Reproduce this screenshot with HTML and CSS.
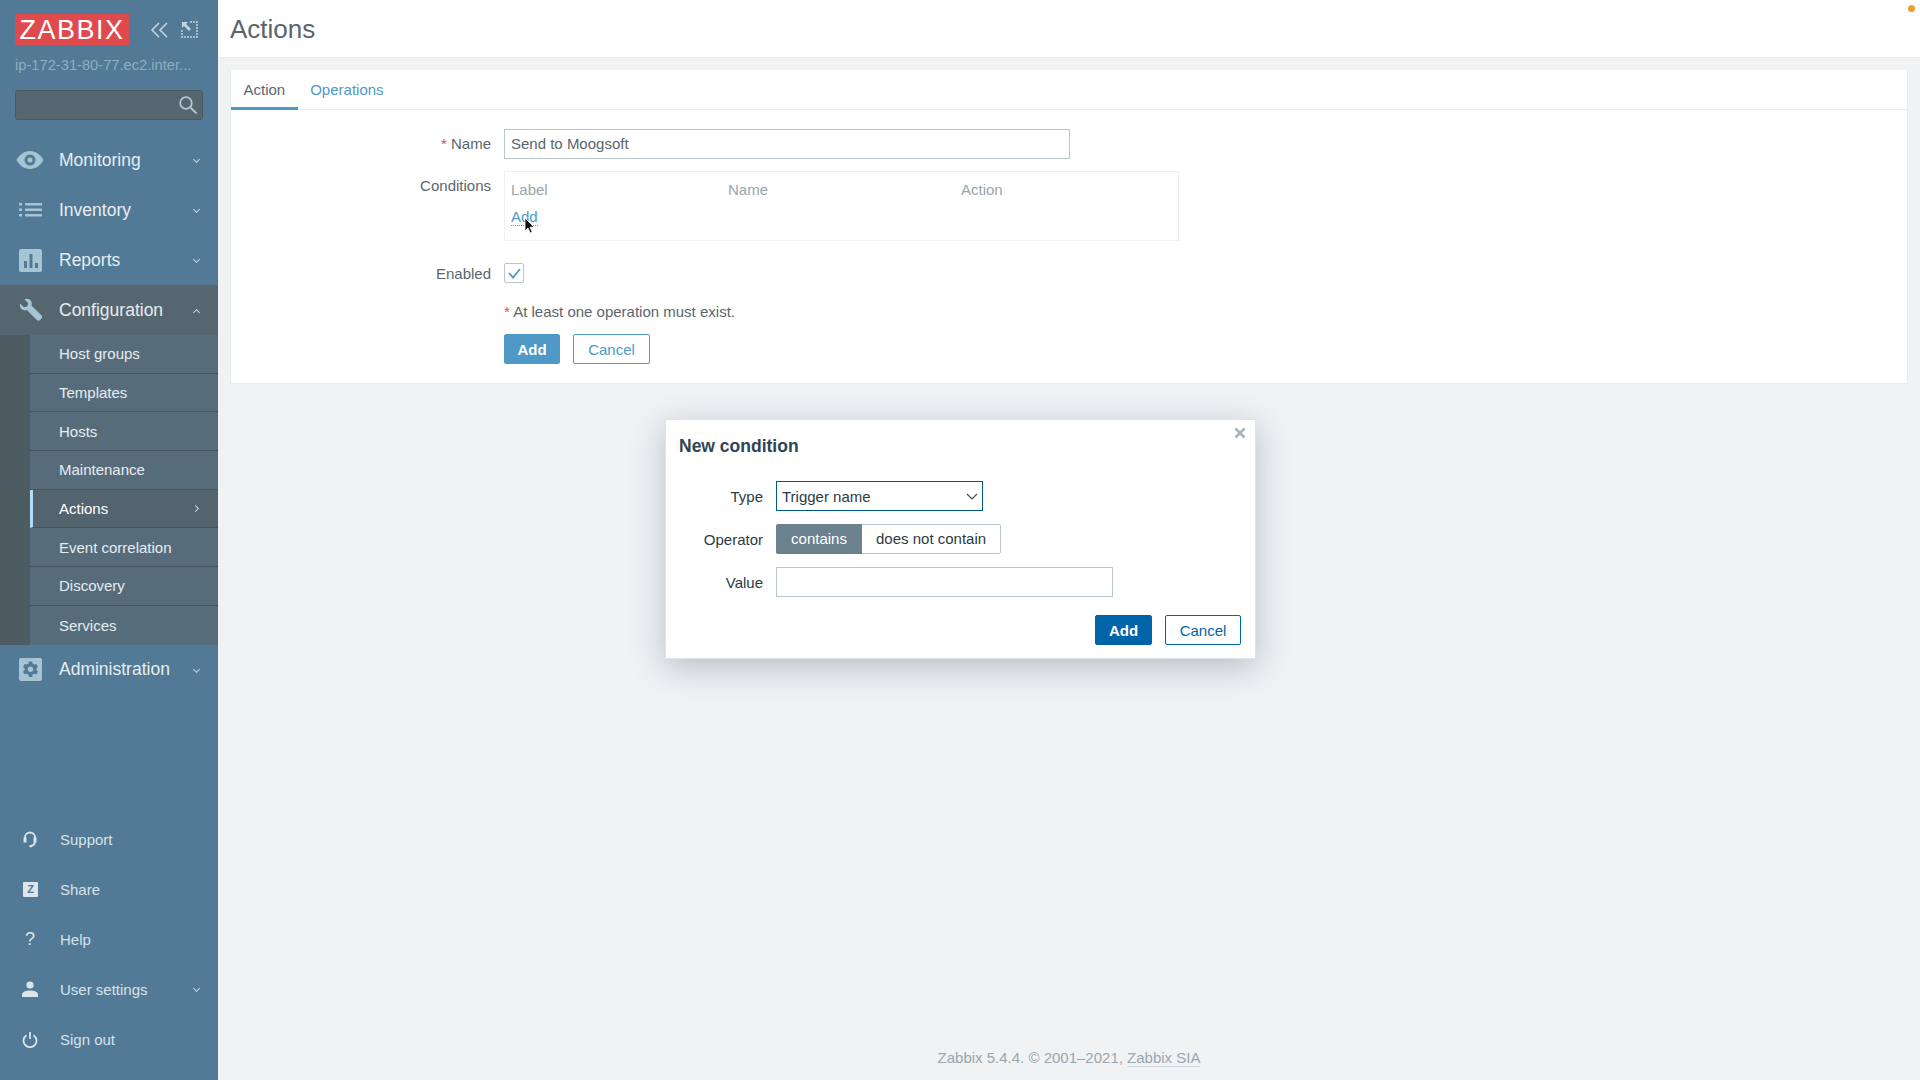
FILE: index.html
```html
<!DOCTYPE html>
<html lang="en">
<head>
  <meta charset="UTF-8">
  <meta name="viewport" content="width=device-width, initial-scale=1.0">
  <title>Actions</title>
  <link rel="stylesheet" href="styles.css">
</head>
<body>
  <aside class="sidebar">
    <div class="brand">
      <span class="logo">ZABBIX</span>
      <svg class="brand-icon collapse" width="20" height="18" viewBox="0 0 20 18"><path d="M9 2 2 9l7 7M17 2l-7 7 7 7"/></svg>
      <svg class="brand-icon expand" width="17" height="17" viewBox="0 0 17 17"><path class="dotted" d="M9 1h7v15H1V9"/><path class="solid" d="M1 1h6L5 3l5 5-2 2-5-5-2 2z"/></svg>
    </div>
    <div class="hostname">ip-172-31-80-77.ec2.inter...</div>
    <div class="search">
      <svg width="20" height="20" viewBox="0 0 20 20"><circle cx="8" cy="8" r="5.8"/><path d="m12.5 12.5 6 6"/></svg>
    </div>

    <nav class="menu">
      <a class="menu-item">
        <span class="menu-icon"><svg width="28" height="20" viewBox="0 0 28 20"><path fill-rule="evenodd" d="M14 1C8 1 3 5 0.500 10 3 15 8 19 14 19s11-4 13.500-9C25 5 20 1 14 1zm0 3.500a5.500 5.500 0 1 1 0 11 5.500 5.500 0 0 1 0-11zm0 3a2.500 2.500 0 1 0 0 5 2.500 2.500 0 0 0 0-5z"/></svg></span>
        Monitoring <span class="caret down"></span>
      </a>
      <a class="menu-item">
        <span class="menu-icon"><svg width="24" height="16" viewBox="0 0 24 16"><path d="M0 1h3v2.500H0zM6 1h17v2.500H6zM0 6.500h3V9H0zM6 6.500h17V9H6zM0 12h3v2.500H0zM6 12h17v2.500H6z"/></svg></span>
        Inventory <span class="caret down"></span>
      </a>
      <a class="menu-item">
        <span class="menu-icon"><svg width="23" height="23" viewBox="0 0 23 23"><path fill-rule="evenodd" d="M2 0h19a2 2 0 0 1 2 2v19a2 2 0 0 1-2 2H2a2 2 0 0 1-2-2V2a2 2 0 0 1 2-2zm3 12v7h3v-7zm5.500-7v14h3V5zM16 14v5h3v-5z"/></svg></span>
        Reports <span class="caret down"></span>
      </a>
      <div class="menu-group">
        <a class="menu-item open">
          <span class="menu-icon"><svg width="24" height="24" viewBox="0 0 24 24"><path d="M1 5.500 5 9.300l3.300-.8.900-3.300L5.400 1.300C8.500-.4 12 1.500 12.700 4.500c.2 1-.1 2.300-.3 3l10 9.800c1 1 1 2.300.1 3.300l-1.400 1.500c-1 1-2.400 1-3.300 0l-9.900-10c-.8.300-2.200.5-3.100.2C2 11.700.2 8.600 1 5.500z"/></svg></span>
          Configuration <span class="caret up"></span>
        </a>
        <div class="submenu">
          <a class="sub-item">Host groups</a>
          <a class="sub-item">Templates</a>
          <a class="sub-item">Hosts</a>
          <a class="sub-item">Maintenance</a>
          <a class="sub-item active">Actions <span class="caret right"></span></a>
          <a class="sub-item">Event correlation</a>
          <a class="sub-item">Discovery</a>
          <a class="sub-item">Services</a>
        </div>
      </div>
      <a class="menu-item">
        <span class="menu-icon"><svg width="23" height="23" viewBox="0 0 23 23"><path fill-rule="evenodd" d="M2 0h19a2 2 0 0 1 2 2v19a2 2 0 0 1-2 2H2a2 2 0 0 1-2-2V2a2 2 0 0 1 2-2zm7.800 3.500-.5 2.300-1.400.8-2.200-.7-1.700 3 1.700 1.500v1.600L4 13.500l1.700 3 2.200-.7 1.400.8.500 2.300h3.400l.5-2.300 1.400-.8 2.200.7 1.700-3-1.700-1.500v-1.600L19 8.900l-1.700-3-2.200.7-1.400-.8-.5-2.300zm1.700 5a2.700 2.700 0 1 1 0 5.400 2.700 2.700 0 0 1 0-5.400z"/></svg></span>
        Administration <span class="caret down"></span>
      </a>
    </nav>

    <nav class="user-menu">
      <a class="user-item">
        <span class="user-icon"><svg width="16" height="18" viewBox="0 0 16 18"><path d="M3 11V7.500a5 5 0 0 1 10 0V11c0 2.500-1.500 4.500-4 5"/><path class="fill" d="M1.500 7.500h3v5h-3zM11.500 7.500h3v5h-3zM7.500 15h2.500v2.200H7.500z"/></svg></span>
        Support
      </a>
      <a class="user-item">
        <span class="user-icon"><span class="share-box">Z</span></span>
        Share
      </a>
      <a class="user-item">
        <span class="user-icon help">?</span>
        Help
      </a>
      <a class="user-item">
        <span class="user-icon"><svg width="16" height="16" viewBox="0 0 16 16"><circle class="fill" cx="8" cy="4" r="3.600"/><path class="fill" d="M0 16v-2.500C0 11 4 9.500 8 9.500s8 1.500 8 4V16z"/></svg></span>
        User settings <span class="caret down"></span>
      </a>
      <a class="user-item">
        <span class="user-icon"><svg width="16" height="17" viewBox="0 0 16 17"><path d="M4.500 4.200a6.500 6.500 0 1 0 7 0M8 1v7"/></svg></span>
        Sign out
      </a>
    </nav>
  </aside>

  <main class="main">
    <header class="page-header">
      <h1>Actions</h1>
    </header>

    <section class="panel">
      <div class="tabs">
        <a class="tab active">Action</a>
        <a class="tab">Operations</a>
      </div>
      <form class="form">
        <div class="form-row row-name">
          <label class="form-label"><span class="req">*</span> Name</label>
          <input class="text-input name-input" type="text" value="Send to Moogsoft">
        </div>
        <div class="form-row row-conditions">
          <label class="form-label">Conditions</label>
          <div class="conditions">
            <div class="cond-head">
              <span class="col-label">Label</span>
              <span class="col-name">Name</span>
              <span>Action</span>
            </div>
            <a class="link-add">Add</a>
          </div>
        </div>
        <div class="form-row row-enabled">
          <label class="form-label">Enabled</label>
          <span class="checkbox">
            <svg width="13" height="11" viewBox="0 0 13 11"><path d="m1 5 4 4.500L12 1"/></svg>
          </span>
        </div>
        <div class="form-row row-note">
          <span class="form-label"></span>
          <span class="note"><span class="req">*</span> At least one operation must exist.</span>
        </div>
        <div class="form-row row-buttons">
          <span class="form-label"></span>
          <button class="btn primary" type="button">Add</button>
          <button class="btn outline" type="button">Cancel</button>
        </div>
      </form>
    </section>

    <footer class="footer">Zabbix 5.4.4. © 2001–2021, <a>Zabbix SIA</a></footer>
  </main>

  <div class="status-dot"></div>

  <div class="dialog">
    <span class="dialog-close">
      <svg width="12" height="12" viewBox="0 0 12 12"><path d="m1.500 1.500 9 9M10.500 1.500l-9 9"/></svg>
    </span>
    <h4>New condition</h4>
    <div class="dialog-row">
      <label class="dialog-label">Type</label>
      <div class="select">Trigger name
        <svg width="12" height="7" viewBox="0 0 12 7"><path d="m1 1 5 5 5-5"/></svg>
      </div>
    </div>
    <div class="dialog-row">
      <label class="dialog-label">Operator</label>
      <div class="radio-group">
        <span class="radio on">contains</span>
        <span class="radio">does not contain</span>
      </div>
    </div>
    <div class="dialog-row">
      <label class="dialog-label">Value</label>
      <input class="text-input value-input" type="text">
    </div>
    <div class="dialog-buttons">
      <button class="btn dlg-primary" type="button">Add</button>
      <button class="btn dlg-outline" type="button">Cancel</button>
    </div>
  </div>

  <svg class="cursor" width="12" height="18" viewBox="0 0 12 18"><path d="M1 1v13l3-3 2.200 5 2-.9L6 10.200h4.200z"/></svg>
</body>
</html>
```

FILE: styles.css
```css
* {
  box-sizing: border-box;
}
html, body {
  height: 100%;
}
body {
  margin: 0;
  display: flex;
  overflow: hidden;
  font-family: "Liberation Sans", Arial, sans-serif;
  font-size: 15px;
  color: #5a666c;
  background: #f0f2f4;
}

/* sidebar */
.sidebar {
  width: 218px;
  height: 1080px;
  flex-shrink: 0;
  display: flex;
  flex-direction: column;
  background: #527a96;
}
.brand {
  display: flex;
  align-items: center;
  height: 31px;
  margin: 14px 0 0 15px;
}
.logo {
  width: 114px;
  height: 31px;
  line-height: 32px;
  text-align: center;
  font-size: 27px;
  letter-spacing: 1.500px;
  color: #fff;
  background: #df4a4c;
}
.brand-icon {
  fill: none;
  stroke: #c3d4df;
}
.brand-icon.collapse {
  margin-left: 21px;
  stroke-width: 1.6;
}
.brand-icon.expand {
  margin-left: 11px;
}
.brand-icon .dotted {
  stroke-dasharray: 2 1;
  stroke-width: 1.500;
}
.brand-icon .solid {
  fill: #c3d4df;
  stroke: none;
}
.hostname {
  margin: 12px 0 0 15px;
  height: 17px;
  line-height: 17px;
  font-size: 14.700px;
  color: #8fadc0;
  white-space: nowrap;
}
.search {
  width: 188px;
  height: 30px;
  margin: 16px 0 0 15px;
  padding: 4px 4px 0 0;
  display: flex;
  justify-content: flex-end;
  background: #56666f;
  border: 1px solid #4a5961;
  border-radius: 3px;
}
.search svg {
  fill: none;
  stroke: #b4c6d1;
  stroke-width: 1.800;
}
.menu {
  margin-top: 15px;
}
.menu-item {
  height: 50px;
  display: flex;
  align-items: center;
  position: relative;
  font-size: 17.500px;
  color: #e6edf1;
}
.menu-icon {
  width: 59px;
  padding-left: 16px;
  flex-shrink: 0;
  display: flex;
  align-items: center;
}
.menu-icon svg {
  fill: #a7c4d5;
}
.menu-item:nth-child(2) .menu-icon,
.menu-item:nth-child(3) .menu-icon,
.menu-item:nth-child(5) .menu-icon,
.menu-item.open .menu-icon {
  padding-left: 19px;
}
.menu-item.open {
  background: #55666f;
}
.caret {
  position: absolute;
  right: 19px;
  top: 50%;
  width: 5px;
  height: 5px;
  border-right: 1px solid #c3d4df;
  border-bottom: 1px solid #c3d4df;
}
.caret.down {
  margin-top: -3px;
  transform: rotate(45deg);
}
.caret.up {
  margin-top: 0;
  transform: rotate(-135deg);
}
.caret.right {
  right: 20px;
  margin-top: -3px;
  transform: rotate(-45deg);
}
.submenu {
  padding-left: 30px;
  background: #4d5b62;
}
.sub-item {
  height: 38.700px;
  padding-left: 29px;
  display: flex;
  align-items: center;
  position: relative;
  color: #e6edf1;
  background: #566c7b;
  border-bottom: 1px solid #47555e;
}
.sub-item:last-child {
  border-bottom: 0;
}
.sub-item.active {
  background: #53646f;
  border-left: 3px solid #b3dcf5;
  padding-left: 26px;
  color: #fff;
}
.user-menu {
  margin-top: auto;
  padding-bottom: 16px;
}
.user-item {
  height: 50px;
  display: flex;
  align-items: center;
  position: relative;
  color: #d7e2e9;
}
.user-icon {
  width: 60px;
  padding-left: 22px;
  flex-shrink: 0;
  display: flex;
  align-items: center;
}
.user-icon svg {
  fill: none;
  stroke: #dbe5eb;
  stroke-width: 1.800;
}
.user-icon .fill {
  fill: #dbe5eb;
  stroke: none;
}
.share-box {
  width: 15px;
  height: 15px;
  margin-left: 1px;
  line-height: 15px;
  text-align: center;
  font-size: 11px;
  font-weight: bold;
  color: #527a96;
  background: #dbe5eb;
  border-radius: 1px;
}
.user-icon.help {
  padding-left: 25px;
  font-size: 18px;
  color: #dbe5eb;
}

/* main area */
.main {
  flex: 1;
  display: flex;
  flex-direction: column;
  height: 1080px;
  min-width: 0;
}
.page-header {
  height: 58px;
  padding: 1px 0 0 12px;
  display: flex;
  align-items: center;
  background: #fff;
  border-bottom: 1px solid #e9ecee;
}
.page-header h1 {
  margin: 0;
  font-size: 26px;
  font-weight: normal;
  color: #59656b;
}
.panel {
  height: 314px;
  margin: 12px 12px 0 12px;
  background: #fff;
  border: 1px solid #e9ecee;
  border-width: 0 1px 1px 1px;
}
.tabs {
  display: flex;
  height: 40px;
  border-bottom: 1px solid #ebeef0;
}
.tab {
  height: 40px;
  line-height: 39px;
  padding: 0 12.500px;
  color: #4f99c6;
  border-bottom: 3px solid transparent;
}
.tab.active {
  color: #5a666c;
  border-bottom-color: #4f99c6;
}
.form {
  padding-top: 19px;
}
.form-row {
  display: flex;
  align-items: center;
}
.form-label {
  width: 260px;
  margin-right: 13px;
  flex-shrink: 0;
  text-align: right;
}
.req {
  color: #df4a4c;
}
.text-input {
  height: 30px;
  padding: 0 6px 2px;
  font: inherit;
  color: #5a666c;
  background: #fff;
  border: 1px solid #b8c6cb;
  outline: none;
}
.name-input {
  width: 566px;
}
.row-name .form-label {
  padding-bottom: 1px;
}
.row-conditions {
  margin-top: 12px;
  align-items: flex-start;
}
.row-conditions .form-label {
  padding-top: 6px;
}
.conditions {
  width: 675px;
  height: 70px;
  padding: 9px 6px 0;
  border: 1px solid #eef0f2;
}
.cond-head {
  display: flex;
  color: #98a5ac;
}
.col-label {
  width: 217px;
}
.col-name {
  width: 233px;
}
.link-add {
  display: inline-block;
  margin-top: 11px;
  color: #4f99c6;
  line-height: 16px;
  border-bottom: 1px dotted #4f99c6;
}
.row-enabled {
  margin-top: 22px;
}
.checkbox {
  width: 20px;
  height: 20px;
  display: flex;
  align-items: center;
  justify-content: center;
  border: 1px solid #b8c6cb;
  border-radius: 2px;
}
.checkbox svg {
  fill: none;
  stroke: #4f99c6;
  stroke-width: 1.800;
}
.row-note {
  margin-top: 20px;
}
.row-buttons {
  margin-top: 14px;
}
.btn {
  height: 30px;
  padding: 0;
  font: inherit;
  border-radius: 2px;
}
.btn.primary {
  width: 56px;
  margin-right: 13px;
  font-weight: bold;
  color: #fff;
  background: #4f99c6;
  border: 1px solid #4f99c6;
}
.btn.outline {
  width: 77px;
  color: #4f99c6;
  background: #fff;
  border: 1px solid #4f99c6;
}
.footer {
  margin-top: auto;
  padding-bottom: 14px;
  text-align: center;
  color: #9aa6ae;
}
.footer a {
  border-bottom: 1px solid #cfd6da;
}
.status-dot {
  position: absolute;
  top: 5px;
  left: 1908px;
  width: 7px;
  height: 7px;
  background: #f29b30;
  border-radius: 50%;
}

/* popup */
.dialog {
  position: absolute;
  left: 665px;
  top: 419px;
  width: 591px;
  height: 240px;
  padding: 16px 14px 0 0;
  background: #fff;
  border: 1px solid #dfe4e7;
  box-shadow: 0 8px 30px rgba(70, 90, 105, 0.34);
  color: #2b3a45;
}
.dialog h4 {
  margin: 0 0 25px 13px;
  height: 20px;
  line-height: 20px;
  font-size: 17.500px;
  color: #2f4554;
}
.dialog-close {
  position: absolute;
  top: 7px;
  right: 9px;
}
.dialog-close svg {
  display: block;
  fill: none;
  stroke: #a9b4ba;
  stroke-width: 2.600;
}
.dialog-row {
  display: flex;
  align-items: center;
  margin-bottom: 13px;
}
.dialog-label {
  width: 97px;
  margin-right: 13px;
  text-align: right;
}
.select {
  width: 207px;
  height: 30px;
  padding: 0 4px 0 5px;
  display: flex;
  align-items: center;
  justify-content: space-between;
  border: 1px solid #005a8c;
}
.select svg {
  fill: none;
  stroke: #3b4a53;
  stroke-width: 1.200;
}
.radio-group {
  display: flex;
  height: 30px;
  line-height: 28px;
  border: 1px solid #b8c6cb;
  border-radius: 2px;
}
.radio {
  padding: 0 14px;
}
.radio.on {
  width: 86px;
  margin: -1px 0 -1px -1px;
  line-height: 30px;
  text-align: center;
  padding: 0;
  color: #fff;
  background: #6c818e;
  border-radius: 2px 0 0 2px;
}
.value-input {
  width: 337px;
}
.dialog-buttons {
  display: flex;
  justify-content: flex-end;
  gap: 13px;
  margin-top: 18px;
}
.btn.dlg-primary {
  width: 57px;
  font-weight: bold;
  color: #fff;
  background: #0065a8;
  border: 1px solid #0065a8;
}
.btn.dlg-outline {
  width: 76px;
  color: #0065a8;
  background: #fff;
  border: 1px solid #0065a8;
}
.cursor {
  position: absolute;
  left: 524px;
  top: 217px;
  fill: #111;
  stroke: #fff;
  stroke-width: 0.800;
}
```
